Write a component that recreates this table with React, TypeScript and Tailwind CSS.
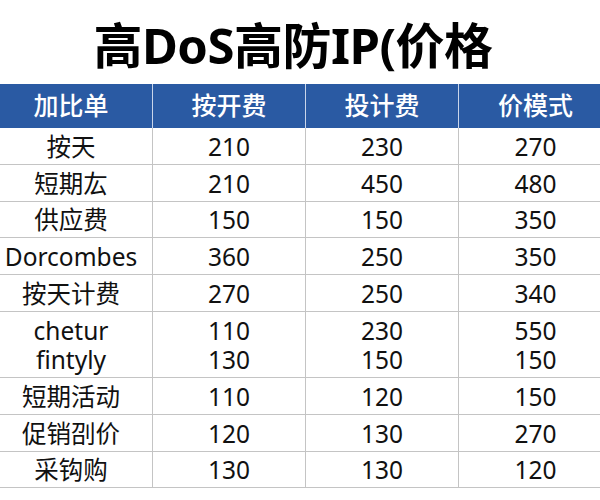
import React from 'react';

const font = "font-['Noto_Sans','Noto_Sans_CJK_SC',sans-serif]";

type Row = { label: string[]; a: string[]; b: string[]; c: string[]; h: string };

const rows: Row[] = [
    { label: ['按天'], a: ['210'], b: ['230'], c: ['270'], h: 'h-[37px]' },
    { label: ['短期厷'], a: ['210'], b: ['450'], c: ['480'], h: 'h-[37px]' },
    { label: ['供应费'], a: ['150'], b: ['150'], c: ['350'], h: 'h-[36px]' },
    { label: ['Dorcombes'], a: ['360'], b: ['250'], c: ['350'], h: 'h-[37px]' },
    { label: ['按天计费'], a: ['270'], b: ['250'], c: ['340'], h: 'h-[37px]' },
    { label: ['chetur', 'fintyly'], a: ['110', '130'], b: ['230', '150'], c: ['550', '150'], h: 'h-[66px]' },
    { label: ['短期活动'], a: ['110'], b: ['120'], c: ['150'], h: 'h-[37px]' },
    { label: ['促销刟价'], a: ['120'], b: ['130'], c: ['270'], h: 'h-[37px]' },
    { label: ['采钩购'], a: ['130'], b: ['130'], c: ['120'], h: 'h-[36px]' },
];

const cols = 'grid grid-cols-[163px_153px_153px_153px]';

const Cell: React.FC<{ lines: string[]; last?: boolean }> = ({ lines, last }) => (
    <div className={`flex flex-col items-center justify-center ${last ? '' : 'border-r border-[#c4c4c4]'}`}>
        {lines.map((l, i) => (
            <span key={i} className="leading-[29px] whitespace-nowrap">{l}</span>
        ))}
    </div>
);

export default function App() {
    return (
        <div className={`w-[600px] h-[500px] overflow-hidden bg-white ${font}`}>
            <div className="h-[84px] flex items-center justify-center pt-[6px] pr-[14px]">
                <h1 className="text-[49px] font-bold leading-none text-black tracking-[-0.5px]">高DoS高防IP(价格</h1>
            </div>
            <div className="w-[622px] ml-[-10px]">
                <div className={`${cols} h-[44px] bg-[#2a5aa3] text-white text-[25px] font-medium`}>
                    {['加比单', '按开费', '投计费', '价模式'].map((t, i) => (
                        <div key={t} className={`flex items-center justify-center ${i < 3 ? 'border-r border-[#c9d5ea]' : ''}`}>
                            {t}
                        </div>
                    ))}
                </div>
                {rows.map((r, i) => (
                    <div key={i} className={`${cols} ${r.h} border-b border-[#c4c4c4] text-[24.5px] text-[#111]`}>
                        <Cell lines={r.label} />
                        <Cell lines={r.a} />
                        <Cell lines={r.b} />
                        <Cell lines={r.c} last />
                    </div>
                ))}
            </div>
        </div>
    );
}
